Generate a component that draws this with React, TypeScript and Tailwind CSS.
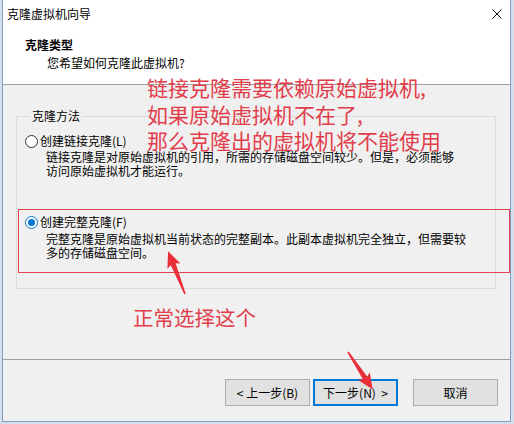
import React from "react";

function Radio({ checked }: { checked?: boolean }) {
  return checked ? (
    <span className="flex h-[13px] w-[13px] shrink-0 items-center justify-center rounded-full border border-[#0078d7] bg-white">
      <span className="h-[7px] w-[7px] rounded-full bg-[#0078d7]" />
    </span>
  ) : (
    <span className="flex h-[13px] w-[13px] shrink-0 items-center justify-center rounded-full border border-[#333333] bg-white" />
  );
}

function Arrow({ x, y, angle, len }: { x: number; y: number; angle: number; len: number }) {
  const L = len;
  const pts = `0,-0.8 ${L - 14},-2.6 ${L - 16},-7 ${L},0 ${L - 16},7 ${L - 14},2.6 0,0.8`;
  return <polygon points={pts} fill="#e8303a" transform={`translate(${x} ${y}) rotate(${angle})`} />;
}

export default function App() {
  return (
    <div className="relative h-[424px] w-[514px] overflow-hidden bg-[#d5dfea] pl-[2px] font-['Noto_Sans_CJK_SC',sans-serif] text-[12px] text-black">
      <div className="flex h-[422px] w-[509px] flex-col border-x border-b border-[#7f9cc2] bg-[#f0f0f0]">
        {/* header */}
        <div className="flex h-[85px] flex-col border-b border-[#a0a0a0] bg-white">
          <div className="flex h-[27px] items-center justify-between pl-[4px] pr-[8px]">
            <span className="leading-[16px]">克隆虚拟机向导</span>
            <svg width="10" height="10" viewBox="0 0 10 10" className="mt-[1px]">
              <path d="M0.5 0.5 L9.5 9.5 M9.5 0.5 L0.5 9.5" stroke="#111" strokeWidth="1" fill="none" />
            </svg>
          </div>
          <div className="pl-[22px] pt-[9px] font-bold leading-[18px]">克隆类型</div>
          <div className="pl-[44px] leading-[18px]">您希望如何克隆此虚拟机?</div>
        </div>
        {/* body */}
        <div className="h-[275px] border-b border-[#a0a0a0]">
          <fieldset className="ml-[13px] mt-[24px] h-[180px] w-[480px] border border-[#dcdcdc] pl-[8px] pt-[11px]">
            <legend className="ml-[5px] px-[2px] leading-[14px]">克隆方法</legend>
            <div className="flex h-[14px] items-center gap-[2px] leading-[14px]">
              <Radio />
              <span>创建链接克隆(L)</span>
            </div>
            <div className="ml-[21px] mt-[2px] whitespace-nowrap leading-[14px]">
              链接克隆是对原始虚拟机的引用，所需的存储磁盘空间较少。但是，必须能够
              <br />
              访问原始虚拟机才能运行。
            </div>
            <div className="mt-[37px] flex h-[14px] items-center gap-[2px] leading-[14px]">
              <Radio checked />
              <span>创建完整克隆(F)</span>
            </div>
            <div className="ml-[21px] mt-[2.5px] whitespace-nowrap leading-[14.5px]">
              完整克隆是原始虚拟机当前状态的完整副本。此副本虚拟机完全独立，但需要较
              <br />
              多的存储磁盘空间。
            </div>
          </fieldset>
        </div>
        {/* buttons */}
        <div className="flex justify-end pr-[12px] pt-[19px]">
          <button className="flex h-[27px] w-[85px] items-center justify-center border border-[#adadad] bg-[#e1e1e1] text-[12px]">
            &lt; 上一步(B)
          </button>
          <button className="ml-[3px] flex h-[27px] w-[85px] items-center justify-center border-2 border-[#0078d7] bg-[#e1e1e1] text-[12px]">
            下一步(N)&nbsp;&nbsp;&gt;
          </button>
          <button className="ml-[15px] flex h-[27px] w-[85px] items-center justify-center border border-[#adadad] bg-[#e1e1e1] text-[12px]">
            取消
          </button>
        </div>
      </div>

      {/* annotations */}
      <div className="pointer-events-none absolute left-[147px] top-[74px] whitespace-nowrap text-[21px] leading-[26.5px] text-[#e23d4b]">
        链接克隆需要依赖原始虚拟机,
        <br />
        如果原始虚拟机不在了,
        <br />
        那么克隆出的虚拟机将不能使用
      </div>
      <div className="pointer-events-none absolute left-[18px] top-[209px] h-[64px] w-[492px] border border-[#e0434d]" />
      <div className="pointer-events-none absolute left-[133px] top-[304px] whitespace-nowrap text-[20.5px] leading-[26px] text-[#e23d4b]">
        正常选择这个
      </div>
      <svg className="pointer-events-none absolute left-0 top-0" width="514" height="424">
        <Arrow x={185} y={294} angle={-111.6} len={46} />
        <Arrow x={348} y={352} angle={56.7} len={45} />
      </svg>
    </div>
  );
}
